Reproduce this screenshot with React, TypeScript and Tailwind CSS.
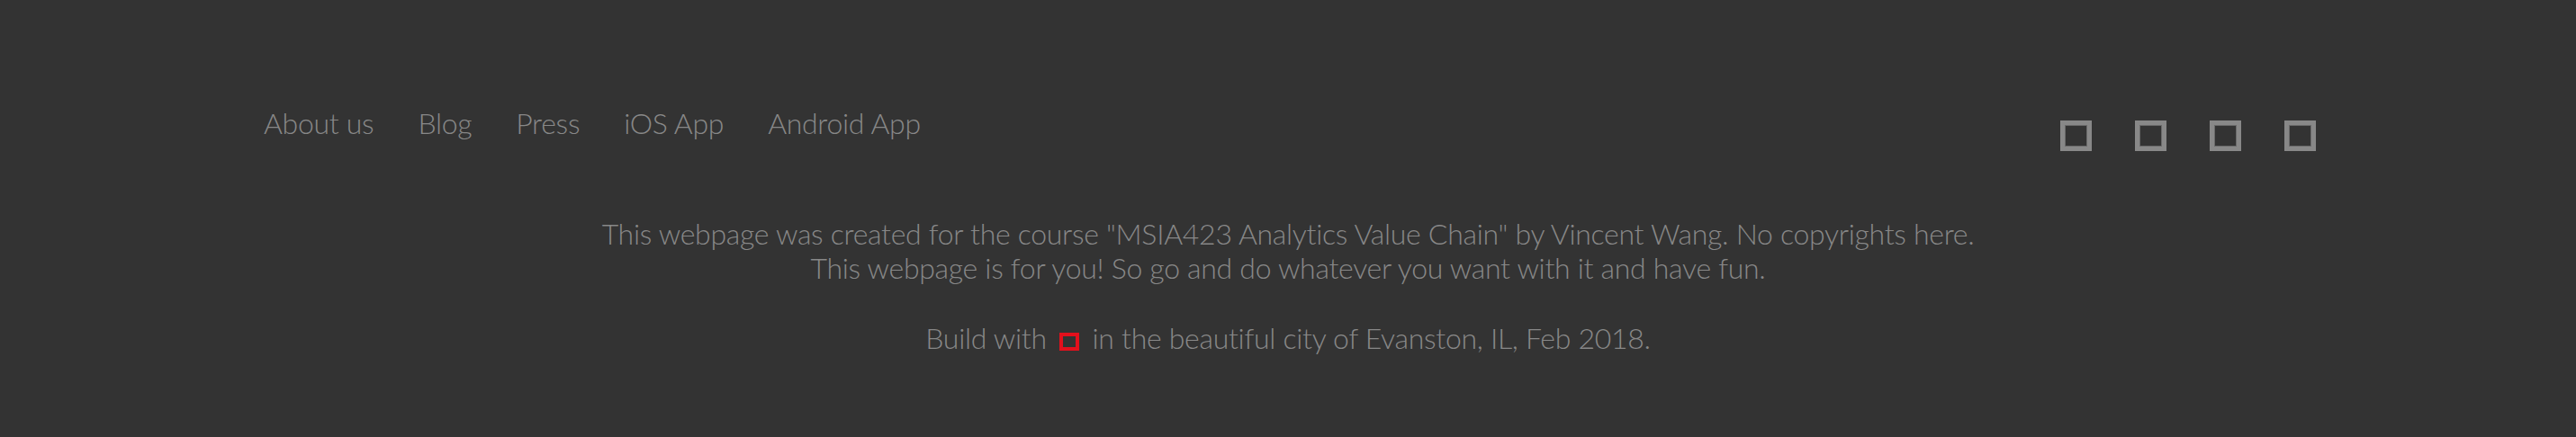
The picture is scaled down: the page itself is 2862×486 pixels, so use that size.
import React from 'react';

const links = ['About us', 'Blog', 'Press', 'iOS App', 'Android App'];

// icon font never loaded on the original page, so the social icons show as empty boxes
const Tofu = () => (
  <span className="block w-[35px] h-[34px] border-[5px] border-[#888] shadow-[inset_0_0_0_1px_#6a6a6a]" />
);

export default function App() {
  return (
    <footer className="w-full h-[486px] overflow-hidden bg-[#333333] text-[#888] font-['Lato','Open_Sans',sans-serif] font-light tracking-[-0.3px]">
      <div className="flex justify-between items-start pl-[293px] pr-[289px] pt-[118px]">
        <ul className="flex gap-[49px] text-[32px] leading-[38px]">
          {links.map(l => (
            <li key={l}>
              <a href="#" className="hover:text-white">{l}</a>
            </li>
          ))}
        </ul>
        <ul className="flex gap-[48px] mt-[16px]">
          {[0, 1, 2, 3].map(i => (
            <li key={i}>
              <a href="#"><Tofu /></a>
            </li>
          ))}
        </ul>
      </div>

      <div className="mt-[73px] text-center text-[32px] leading-[38px]">
        <p>
          This webpage was created for the course "MSIA423 Analytics Value Chain" by Vincent Wang. No copyrights here.
          <br />
          This webpage is for you! So go and do whatever you want with it and have fun.
        </p>
        <p className="mt-[40px]">
          Build with{' '}
          <span className="inline-block align-[-2px] w-[22px] h-[20px] border-[4px] border-[#e3101c] mx-[6px]" />{' '}
          in the beautiful city of Evanston, IL, Feb 2018.
        </p>
      </div>
    </footer>
  );
}
